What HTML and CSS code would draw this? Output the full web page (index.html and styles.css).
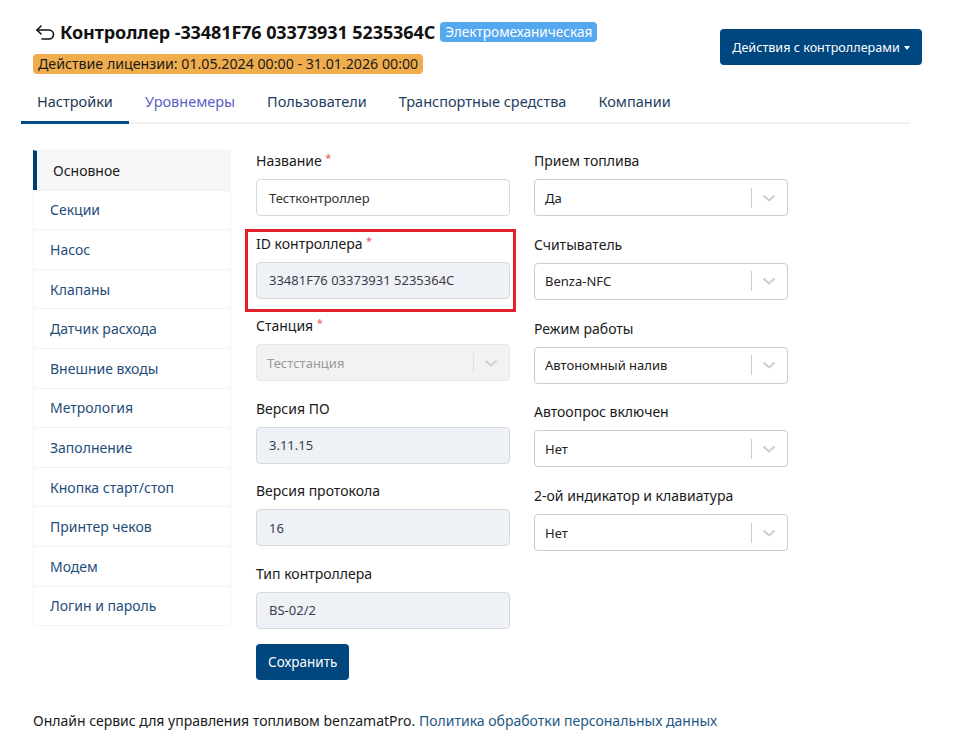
FILE: index.html
```html
<!DOCTYPE html>
<html lang="ru">
<head>
<meta charset="utf-8">
<title>Контроллер</title>
<link rel="stylesheet" href="styles.css">
</head>
<body>
<div class="page">
  <header class="header">
    <div class="header-left">
      <div class="title-row">
        <svg class="back-icon" viewBox="0 0 22 18" width="22" height="18" aria-hidden="true">
          <path d="M6 3 L2 7 L6 11" fill="none" stroke="#111" stroke-width="1.6" stroke-linecap="round" stroke-linejoin="round"/>
          <path d="M2 7 H14 a4.5 4.5 0 0 1 0 9 H7" fill="none" stroke="#111" stroke-width="1.6" stroke-linecap="round"/>
        </svg>
        <h1 class="title">Контроллер -33481F76 03373931 5235364C</h1>
        <span class="badge badge-blue">Электромеханическая</span>
      </div>
      <span class="badge badge-orange">Действие лицензии: 01.05.2024 00:00 - 31.01.2026 00:00</span>
    </div>
    <button class="btn btn-primary btn-actions">Действия с контроллерами <span class="caret"></span></button>
  </header>

  <nav class="tabs">
    <a class="tab active">Настройки</a>
    <a class="tab visited">Уровнемеры</a>
    <a class="tab">Пользователи</a>
    <a class="tab">Транспортные средства</a>
    <a class="tab">Компании</a>
  </nav>

  <main class="content">
    <aside class="sidebar">
      <div class="side-item active">Основное</div>
      <div class="side-item">Секции</div>
      <div class="side-item">Насос</div>
      <div class="side-item">Клапаны</div>
      <div class="side-item">Датчик расхода</div>
      <div class="side-item">Внешние входы</div>
      <div class="side-item">Метрология</div>
      <div class="side-item">Заполнение</div>
      <div class="side-item">Кнопка старт/стоп</div>
      <div class="side-item">Принтер чеков</div>
      <div class="side-item">Модем</div>
      <div class="side-item">Логин и пароль</div>
    </aside>

    <div class="form">
      <div class="col col-left">
        <div class="group">
          <label class="label">Название <span class="req">*</span></label>
          <div class="input">Тестконтроллер</div>
        </div>
        <div class="group highlighted">
          <label class="label">ID контроллера <span class="req">*</span></label>
          <div class="input readonly">33481F76 03373931 5235364C</div>
        </div>
        <div class="group">
          <label class="label">Станция <span class="req">*</span></label>
          <div class="select disabled"><span class="select-value">Тестстанция</span><span class="sep"></span><svg class="chev" viewBox="0 0 14 8" width="14" height="8"><path d="M1.5 1.5 L7 6.5 L12.5 1.5" fill="none" stroke="#cfcfcf" stroke-width="1.8"/></svg></div>
        </div>
        <div class="group">
          <label class="label">Версия ПО</label>
          <div class="input readonly">3.11.15</div>
        </div>
        <div class="group">
          <label class="label">Версия протокола</label>
          <div class="input readonly">16</div>
        </div>
        <div class="group">
          <label class="label">Тип контроллера</label>
          <div class="input readonly">BS-02/2</div>
        </div>
        <button class="btn btn-primary btn-save">Сохранить</button>
      </div>

      <div class="col col-right">
        <div class="group">
          <label class="label">Прием топлива</label>
          <div class="select"><span class="select-value">Да</span><span class="sep"></span><svg class="chev" viewBox="0 0 14 8" width="14" height="8"><path d="M1.5 1.5 L7 6.5 L12.5 1.5" fill="none" stroke="#cccccc" stroke-width="1.8"/></svg></div>
        </div>
        <div class="group">
          <label class="label">Считыватель</label>
          <div class="select"><span class="select-value">Benza-NFC</span><span class="sep"></span><svg class="chev" viewBox="0 0 14 8" width="14" height="8"><path d="M1.5 1.5 L7 6.5 L12.5 1.5" fill="none" stroke="#cccccc" stroke-width="1.8"/></svg></div>
        </div>
        <div class="group">
          <label class="label">Режим работы</label>
          <div class="select"><span class="select-value">Автономный налив</span><span class="sep"></span><svg class="chev" viewBox="0 0 14 8" width="14" height="8"><path d="M1.5 1.5 L7 6.5 L12.5 1.5" fill="none" stroke="#cccccc" stroke-width="1.8"/></svg></div>
        </div>
        <div class="group">
          <label class="label">Автоопрос включен</label>
          <div class="select"><span class="select-value">Нет</span><span class="sep"></span><svg class="chev" viewBox="0 0 14 8" width="14" height="8"><path d="M1.5 1.5 L7 6.5 L12.5 1.5" fill="none" stroke="#cccccc" stroke-width="1.8"/></svg></div>
        </div>
        <div class="group">
          <label class="label">2-ой индикатор и клавиатура</label>
          <div class="select"><span class="select-value">Нет</span><span class="sep"></span><svg class="chev" viewBox="0 0 14 8" width="14" height="8"><path d="M1.5 1.5 L7 6.5 L12.5 1.5" fill="none" stroke="#cccccc" stroke-width="1.8"/></svg></div>
        </div>
      </div>
    </div>
  </main>

  <footer class="footer">
    Онлайн сервис для управления топливом benzamatPro. <a class="footer-link">Политика обработки персональных данных</a>
  </footer>
</div>
</body>
</html>
```

FILE: styles.css
```css
* { box-sizing: border-box; }

html, body {
  margin: 0;
  padding: 0;
  background: #ffffff;
}

body {
  font-family: "Noto Sans", "Open Sans", sans-serif;
  color: #212529;
  font-size: 14px;
}

.page {
  width: 955px;
  min-height: 747px;
}

/* Header */
.header {
  display: flex;
  justify-content: space-between;
  align-items: flex-start;
  padding: 21px 33px 0 33px;
}

.header-left {
  display: flex;
  flex-direction: column;
  align-items: flex-start;
  gap: 11px;
}

.title-row {
  display: flex;
  align-items: center;
  height: 22px;
}

.back-icon {
  margin-left: 2px;
  margin-right: 3px;
  display: block;
}

.title {
  margin: 0;
  font-size: 18px;
  font-weight: 700;
  color: #111;
  line-height: 22px;
  letter-spacing: -0.1px;
}

.badge {
  display: inline-block;
  border-radius: 4px;
  line-height: 20px;
  padding: 0 5px;
  white-space: nowrap;
}

.badge-blue {
  background: #54a8f0;
  color: #fff;
  margin-left: 5px;
  font-size: 13.6px;
}

.badge-orange {
  background: #f0ad4e;
  color: #1a1a1a;
  font-size: 14.2px;
}

.btn {
  border: none;
  border-radius: 4px;
  font-family: inherit;
  cursor: pointer;
}

.btn-primary {
  background: #00467f;
  color: #fff;
}

.btn-actions {
  margin-top: 8px;
  height: 36px;
  padding: 0 12px;
  font-size: 12.6px;
}

.caret {
  display: inline-block;
  width: 0;
  height: 0;
  border-left: 3.5px solid transparent;
  border-right: 3.5px solid transparent;
  border-top: 4px solid #fff;
  vertical-align: 2px;
  margin-left: 1px;
}

/* Tabs */
.tabs {
  display: flex;
  margin: 9px 45px 0 21px;
  border-bottom: 2px solid #f2f2f2;
}

.tab {
  padding: 8px 16px 10px 16px;
  font-size: 14.5px;
  line-height: 20px;
  color: #1e3d5f;
  border-bottom: 3px solid transparent;
  margin-bottom: -2px;
}

.tab.active {
  border-bottom-color: #004b87;
  color: #1e3655;
}

.tab.visited {
  color: #5b5fc4;
}

/* Content */
.content {
  display: flex;
  padding: 26px 0 0 33px;
}

.sidebar {
  width: 198px;
  display: flex;
  flex-direction: column;
  border: 1px solid #f4f4f4;
  border-top: none;
  align-self: flex-start;
}

.side-item {
  height: 39.6px;
  display: flex;
  align-items: center;
  padding-left: 16px;
  color: #1f4d7a;
  font-size: 14px;
  border-top: 1px solid #f3f3f3;
  background: #fff;
}

.side-item.active {
  background: #f7f7f7;
  border-left: 4px solid #003e72;
  padding-left: 16px;
  color: #1a1a1a;
  margin-left: -1px;
}

.form {
  display: flex;
  gap: 24px;
  margin-left: 25px;
  margin-top: 1px;
}

.col {
  width: 254px;
  display: flex;
  flex-direction: column;
}

.group {
  display: flex;
  flex-direction: column;
  position: relative;
}

.col-left .group {
  margin-bottom: 17.5px;
}

.col-right .group {
  margin-bottom: 18.8px;
}

.group.highlighted::after {
  content: "";
  position: absolute;
  left: -11px;
  right: -6px;
  top: -5px;
  bottom: -13px;
  border: 3px solid #e3202a;
  pointer-events: none;
}

.label {
  display: block;
  height: 20px;
  font-size: 14px;
  line-height: 20px;
  color: #1a1a1a;
  margin-bottom: 8px;
}

.req {
  color: #e8595c;
  font-size: 11px;
  line-height: 0;
  vertical-align: 4px;
}

.input, .select {
  height: 37px;
  border: 1px solid #d6d9de;
  border-radius: 4px;
  display: flex;
  align-items: center;
  padding-left: 12px;
  font-size: 13px;
  color: #333;
  background: #fff;
}

.input.readonly {
  background: #eef1f6;
  color: #3d3d4a;
}

.select {
  padding-left: 10px;
  border-color: #cccccc;
  color: #222;
}

.select-value {
  flex: 1;
}

.sep {
  width: 1px;
  height: 20px;
  background: #cccccc;
}

.chev {
  margin: 0 11px 0 10px;
  display: block;
}

.select.disabled {
  background: #f2f2f2;
  border-color: #e6e6e6;
  color: #9a9a9a;
}

.select.disabled .sep {
  background: #e0e0e0;
}

.btn-save {
  align-self: flex-start;
  height: 36px;
  padding: 0 12px;
  font-size: 13.5px;
  margin-top: -2px;
}

/* Footer */
.footer {
  padding: 31px 33px 0 33px;
  font-size: 14px;
  line-height: 20px;
  color: #1a1a1a;
}

.footer-link {
  color: #1f5785;
}
```
